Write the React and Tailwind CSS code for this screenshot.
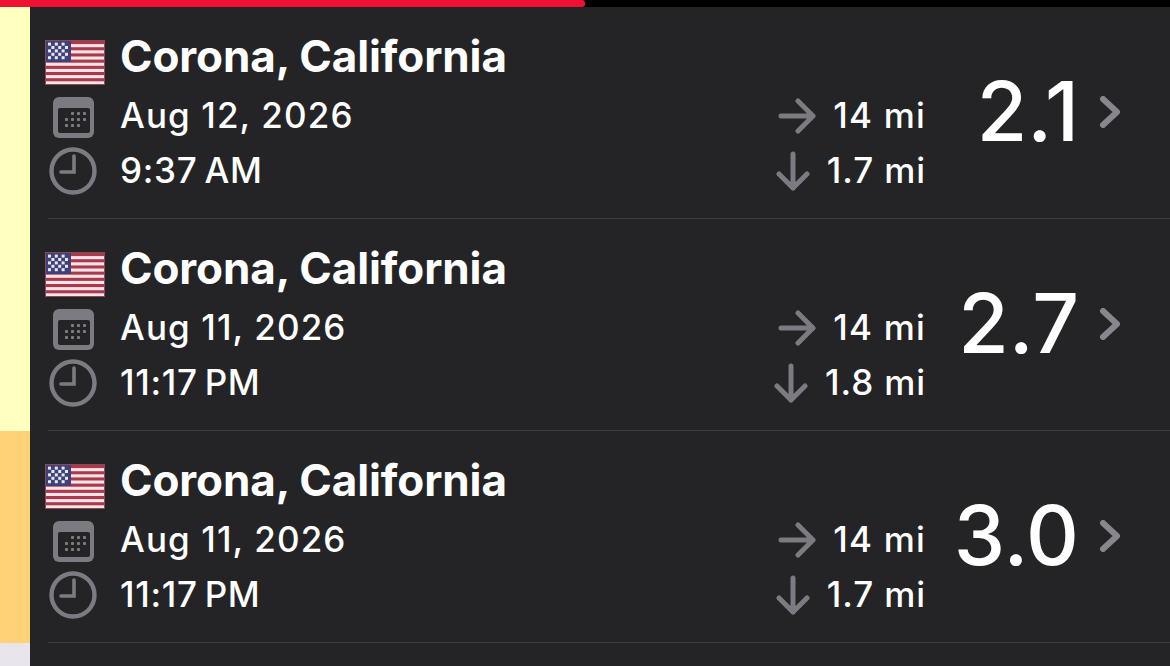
const trips = [
  { date: 'Aug 12, 2026', time: '9:37 AM', across: '14 mi', down: '1.7 mi', score: '2.1' },
  { date: 'Aug 11, 2026', time: '11:17 PM', across: '14 mi', down: '1.8 mi', score: '2.7' },
  { date: 'Aug 11, 2026', time: '11:17 PM', across: '14 mi', down: '1.7 mi', score: '3.0' },
];

function Flag() {
  const stripes = [0, 1, 2, 3, 4, 5, 6];
  const stars = [];
  for (let y = 0; y < 5; y++) {
    for (let x = 0; x < 6; x++) {
      if ((x + y) % 2 === 0) {
        stars.push(<rect key={`${x}-${y}`} x={3 + x * 3.4} y={2.6 + y * 3.4} width="3" height="3" fill="#e8e6f0" />);
      }
    }
  }
  return (
    <svg width="60" height="45" viewBox="0 0 60 45" className="shrink-0 mt-[12px]">
      <rect width="60" height="45" fill="#8a4a55" />
      <rect x="1" y="1" width="58" height="43" fill="#fbe4e8" />
      {stripes.map((i) => (
        <rect key={i} x="1" y={1 + i * 6.2} width="58" height="3.1" fill="#a93a4c" />
      ))}
      <rect x="1" y="1" width="25" height="21" fill="#3f4279" />
      {stars}
    </svg>
  );
}

function CalendarIcon() {
  const dots = [
    [23, 15], [29, 15], [35, 15],
    [17, 21], [23, 21], [29, 21], [35, 21],
    [17, 27], [23, 27], [29, 27],
  ];
  return (
    <svg width="41" height="41" viewBox="0 0 41 41" className="ml-[8px] mt-[2px]">
      <rect width="41" height="41" rx="6" fill="#7c7b81" />
      <rect x="5" y="11" width="32" height="25" rx="2" fill="#242426" />
      {dots.map(([x, y]) => (
        <rect key={`${x}-${y}`} x={x - 5} y={y} width="3" height="3" rx="0.8" fill="#7c7b81" />
      ))}
    </svg>
  );
}

function ClockIcon() {
  return (
    <svg width="48" height="48" viewBox="0 0 48 48" className="ml-[4px]" fill="none" stroke="#7c7b81" strokeWidth="4.4">
      <circle cx="24" cy="24" r="21.5" />
      <path d="M25 9v16H12" strokeLinecap="round" strokeLinejoin="miter" strokeWidth="3.6" />
    </svg>
  );
}

function ArrowRight() {
  return (
    <svg width="38" height="36" viewBox="0 0 38 36" fill="none" stroke="#7c7b81" strokeWidth="5" strokeLinecap="round" strokeLinejoin="round">
      <path d="M3 18h32M20 3l15 15-15 15" />
    </svg>
  );
}

function ArrowDown() {
  return (
    <svg width="34" height="40" viewBox="0 0 34 40" fill="none" stroke="#7c7b81" strokeWidth="5" strokeLinecap="round" strokeLinejoin="round">
      <path d="M17 3v34M3 23l14 14 14-14" />
    </svg>
  );
}

function Chevron() {
  return (
    <svg width="22" height="32" viewBox="0 0 22 32" fill="none" stroke="#88878d" strokeWidth="6" strokeLinecap="round" strokeLinejoin="round">
      <path d="M4 3l14 13L4 29" />
    </svg>
  );
}

function TripRow({ trip }) {
  return (
    <div className="h-[212px] pl-[18px]">
      <div className="flex h-full border-b border-[#3e3e41]">
        <div className="-ml-[3px] pt-[19px] flex-1">
          <div className="flex h-[60px] items-center">
            <div className="w-[76px]"><Flag /></div>
            <span className="text-[44px] font-bold tracking-[-0.1px] -ml-[1px]">Corona, California</span>
          </div>
          <div className="flex h-[60px] items-center">
            <div className="w-[76px]"><CalendarIcon /></div>
            <span className="text-[35px] font-medium tracking-[1.1px] -mt-[2px] -ml-[1px]">{trip.date}</span>
          </div>
          <div className="flex h-[50px] items-center">
            <div className="w-[76px]"><ClockIcon /></div>
            <span className="text-[35px] font-medium tracking-[0.7px] [word-spacing:-3px] -mt-[2px] -ml-[1px]">{trip.time}</span>
          </div>
        </div>
        <div className="pt-[79px] w-[201px]">
          <div className="flex h-[60px] items-center justify-end gap-[17px]">
            <ArrowRight />
            <span className="text-[35px] font-medium tracking-[1.2px] -mt-[2px]">{trip.across}</span>
          </div>
          <div className="flex h-[50px] items-center justify-end gap-[17px]">
            <ArrowDown />
            <span className="text-[35px] font-medium tracking-[0.9px] -mt-[2px]">{trip.down}</span>
          </div>
        </div>
        <div className="w-[153px] pt-[57px] flex justify-end">
          <span className="text-[82px] leading-[96px] font-medium">{trip.score}</span>
        </div>
        <div className="w-[91px] pt-[89px] pl-[20px]">
          <Chevron />
        </div>
      </div>
    </div>
  );
}

export default function App() {
  return (
    <div className="h-[666px] w-[1170px] overflow-hidden bg-[#242426] text-white font-['Inter',sans-serif]">
      <div className="h-[7px] bg-black">
        <div className="h-full w-[585px] rounded-r-[3px] bg-[#ee1133]" />
      </div>
      <div className="flex h-[659px]">
        <div className="flex w-[30px] flex-col">
          <div className="h-[424px] bg-[#ffffc0]" />
          <div className="h-[212px] bg-[#ffd278]" />
          <div className="flex-1 bg-[#e8e6ec]" />
        </div>
        <div className="flex-1">
          {trips.map((trip, i) => (
            <TripRow key={i} trip={trip} />
          ))}
        </div>
      </div>
    </div>
  );
}
